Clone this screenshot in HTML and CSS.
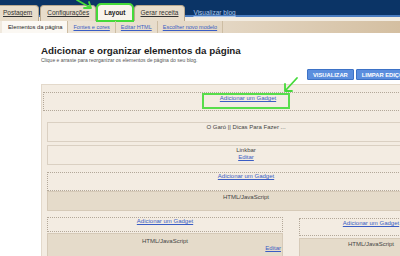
FILE: index.html
```html
<!DOCTYPE html>
<html lang="pt">
<head>
<meta charset="utf-8">
<title>Layout</title>
<link rel="stylesheet" href="styles.css">
</head>
<body>
<header class="topbar">
  <nav class="tabs">
    <a class="tab">Postagem</a>
    <a class="tab">Configurações</a>
    <a class="tab active">Layout</a>
    <a class="tab">Gerar receita</a>
    <a class="viewblog">Visualizar blog</a>
  </nav>
</header>
<nav class="subnav">
  <span class="sub active">Elementos da página</span>
  <a class="sub">Fontes e cores</a>
  <a class="sub">Editar HTML</a>
  <a class="sub">Escolher novo modelo</a>
</nav>
<main class="content">
  <h1 class="title">Adicionar e organizar elementos da página</h1>
  <p class="hint">Clique e arraste para reorganizar os elementos de página do seu blog.</p>
  <div class="actions">
    <button class="btn">VISUALIZAR</button>
    <button class="btn">LIMPAR EDIÇÕES</button>
  </div>
  <section class="layoutbox">
    <div class="addzone header-zone"><a class="link marked">Adicionar um Gadget</a></div>
    <div class="blog">
      <div class="gadget">O Garó || Dicas Para Fazer ...</div>
      <div class="gadget"><span class="gname">Linkbar</span><a class="link">Editar</a></div>
      <div class="addzone main-zone"><a class="link">Adicionar um Gadget</a></div>
      <div class="gadget dark">HTML/JavaScript</div>
      <div class="cols">
        <div class="col col-main">
          <div class="addzone"><a class="link">Adicionar um Gadget</a></div>
          <div class="gadget dark tall"><span class="gname">HTML/JavaScript</span><a class="link edit-right">Editar</a></div>
        </div>
        <div class="col col-side">
          <div class="addzone"><a class="link">Adicionar um Gadget</a></div>
          <div class="gadget dark tall"><span class="gname">HTML/JavaScript</span></div>
        </div>
      </div>
    </div>
  </section>
</main>
<svg class="arrow arrow-tab" width="24" height="12" viewBox="0 0 24 12">
  <path d="M5 0 L19 8 M19 8 L12 8 M19 8 L17 2" fill="none" stroke="#45da3a" stroke-width="1.8" stroke-linecap="round"/>
</svg>
<svg class="arrow arrow-add" width="22" height="22" viewBox="0 0 22 22">
  <path d="M17 4 L5 17 M5 17 L12 17 M5 17 L5 10" fill="none" stroke="#45da3a" stroke-width="1.8" stroke-linecap="round"/>
</svg>
</body>
</html>
```
FILE: styles.css
```css
html, body {
  margin: 0;
  padding: 0;
  overflow: hidden;
  background: #fff;
}
body {
  width: 400px;
  height: 256px;
  position: relative;
  font-family: "Liberation Sans", Arial, sans-serif;
  color: #333;
}

.topbar {
  height: 21px;
  background: linear-gradient(#0b3466 0 15px, #4a7cc0 15px 17px, #f2ece2 17px);
  display: flex;
  align-items: flex-end;
}
.tabs {
  display: flex;
  align-items: flex-end;
  gap: 1px;
  margin-left: -4px;
}
.tab {
  height: 16px;
  box-sizing: border-box;
  padding: 3px 6px 0;
  font-size: 6.5px;
  line-height: 8px;
  background: #e8ddcb;
  border: 1px solid #b9a88e;
  border-bottom: none;
  border-radius: 4px 4px 0 0;
  color: #333;
  text-decoration: underline;
  white-space: nowrap;
}
.tab.active {
  height: 17px;
  padding-top: 4px;
  background: #f8f4ec;
  font-weight: bold;
  color: #222;
  text-decoration: none;
  outline: 2px solid #45da3a;
  outline-offset: -1px;
}
.viewblog {
  margin-left: 7px;
  align-self: flex-start;
  margin-top: 5px;
  font-size: 6.5px;
  line-height: 8px;
  color: #a9c6ec;
  text-decoration: underline;
  white-space: nowrap;
}

.subnav {
  height: 12px;
  display: flex;
  background: linear-gradient(to right, #f0e9de, #e4d7c4 55%, #d4bfa1);
  font-size: 5.5px;
  line-height: 12px;
}
.sub {
  padding: 0 5px;
  border-right: 1px solid #cdbda3;
  color: #3a5dc4;
  text-decoration: underline;
  white-space: nowrap;
}
.sub.active {
  margin-left: 2px;
  padding: 0 5px 0 6px;
  background: #fbf8f3;
  color: #222;
  font-size: 5.8px;
  text-decoration: none;
}

.content {
  width: 410px;
  padding-left: 41px;
}
.title {
  margin: 12px 0 0;
  font-size: 9.8px;
  line-height: 12px;
  font-weight: bold;
  color: #222;
  white-space: nowrap;
}
.hint {
  margin: 0;
  font-size: 5px;
  line-height: 6px;
  color: #555;
  white-space: nowrap;
}
.actions {
  display: flex;
  gap: 2px;
  margin-top: 6px;
  padding-left: 266px;
}
.btn {
  height: 11px;
  padding: 0 5px;
  font-family: "Liberation Sans", Arial, sans-serif;
  font-size: 5.8px;
  font-weight: bold;
  color: #fff;
  background: #5b8ede;
  border: 1px solid #3d72c6;
  border-radius: 1px;
  white-space: nowrap;
}

.layoutbox {
  margin-top: 4px;
  height: 200px;
  background: #f3ece2;
  border: 1px solid #e3d9cb;
  padding: 7px 1px 0;
}
.link {
  color: #3a5dc4;
  text-decoration: underline;
}
.addzone {
  box-sizing: border-box;
  height: 19px;
  border: 1px dotted #b3a899;
  text-align: center;
  font-size: 6px;
  line-height: 7px;
}
.header-zone {
  display: flex;
  justify-content: center;
}
.marked {
  display: inline-block;
  height: 16px;
  box-sizing: border-box;
  padding: 0 12px 5px 16px;
  border: 2px solid #57dd4b;
}
.blog {
  padding: 0 4px;
}
.gadget {
  box-sizing: border-box;
  height: 20px;
  margin-top: 3px;
  padding-top: 1px;
  border: 1px solid #dad0c2;
  text-align: center;
  font-size: 6px;
  line-height: 7px;
  color: #444;
}
.blog > .gadget:first-child {
  margin-top: 11px;
}
.gname, .gadget .link {
  display: block;
}
.main-zone {
  margin-top: 7px;
}
.gadget.dark {
  margin-top: 0;
  padding-top: 2px;
  background: #e5dbca;
  border-color: #d6cab8;
}
.cols {
  display: grid;
  grid-template-columns: 236px 144px;
  gap: 16px;
  margin-top: 6px;
}
.col-main .addzone {
  height: 15px;
}
.col-main .gadget {
  margin-top: 1px;
  padding-top: 4px;
}
.col-side .addzone {
  height: 18px;
  margin-top: 1px;
  padding-top: 1px;
}
.col-side .gadget {
  margin-top: 2px;
}
.gadget.tall {
  height: 30px;
}
.edit-right {
  text-align: right;
  padding-right: 1px;
}

.arrow {
  position: absolute;
}
.arrow-tab {
  left: 72px;
  top: 0;
}
.arrow-add {
  left: 280px;
  top: 74px;
}
```
